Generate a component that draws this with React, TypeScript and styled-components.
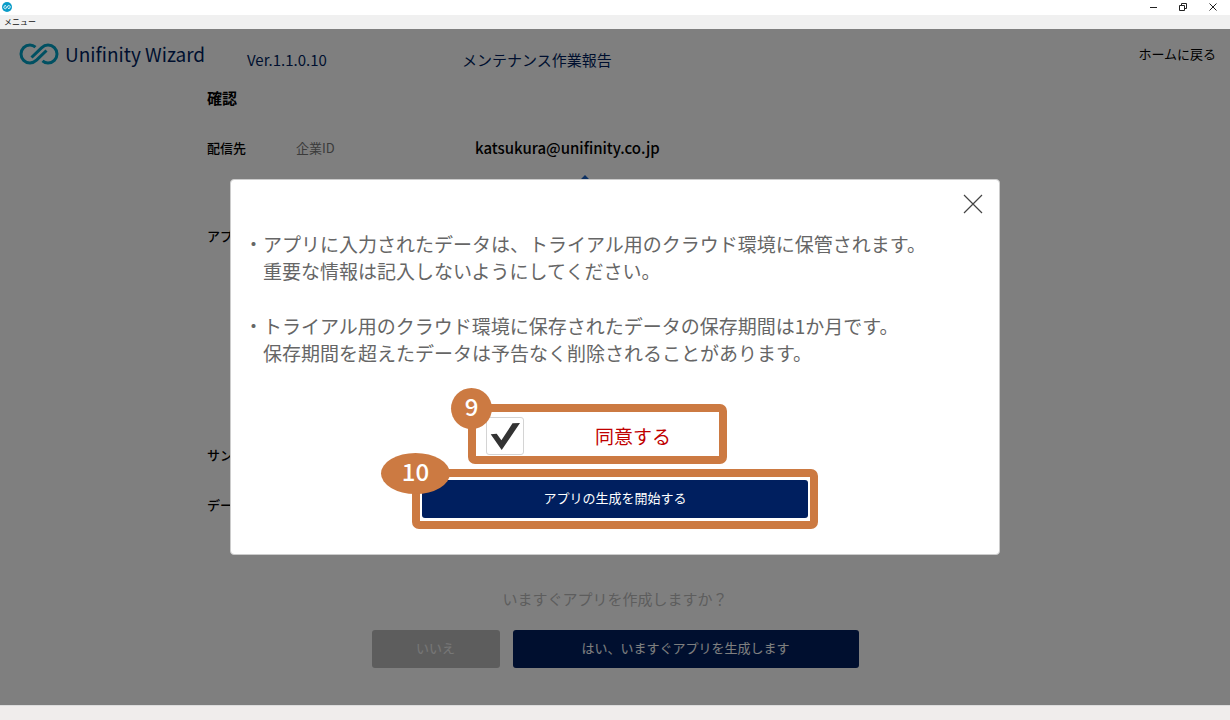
import React, { useState } from "react";
import styled, { createGlobalStyle } from "styled-components";

const Global = createGlobalStyle`
  * { box-sizing: border-box; }
  body { margin: 0; font-family: "Noto Sans CJK JP", "Noto Sans", sans-serif; }
  button { font-family: inherit; cursor: pointer; }
  h1, h2, p, ul { margin: 0; padding: 0; }
`;

const navy = "#001f5f";
const orange = "#cc7a42";

const Window = styled.div`
  min-height: 100vh;
  display: flex;
  flex-direction: column;
  background: #fff;
`;

const TitleBar = styled.div`
  height: 15px;
  display: flex;
  align-items: center;
  justify-content: space-between;
  padding: 0 2px 1px;
`;

const WindowControls = styled.div`
  display: flex;
`;

const WindowButton = styled.button`
  width: 30px;
  height: 14px;
  padding: 0;
  border: 0;
  background: none;
  display: flex;
  align-items: center;
  justify-content: center;
`;

const MenuBar = styled.nav`
  height: 14px;
  display: flex;
  align-items: center;
  background: #f0f0f0;
  padding-left: 4px;
`;

const MenuButton = styled.button`
  border: 0;
  padding: 0;
  background: none;
  font-size: 8px;
  line-height: 14px;
  color: #111;
`;

const Stage = styled.div`
  position: relative;
  flex: 1;
  display: flex;
  flex-direction: column;
`;

const Header = styled.header`
  display: grid;
  grid-template-columns: 228px 215px 1fr auto;
  align-items: center;
  padding: 7px 14px 0 19px;
  color: ${navy};
`;

const Brand = styled.div`
  display: flex;
  align-items: center;
  gap: 6px;
  font-size: 19px;
  line-height: 32px;
`;

const HeaderText = styled.p`
  font-size: 15px;
  line-height: 24px;
  padding-top: 12px;
`;

const HomeLink = styled.a`
  font-size: 13px;
  line-height: 30px;
  color: #000;
  text-decoration: none;
`;

const Content = styled.main`
  width: 816px;
  max-width: 100%;
  margin: 0 auto;
  display: flex;
  flex-direction: column;
`;

const Heading = styled.h1`
  font-size: 15px;
  line-height: 24px;
  font-weight: 700;
  padding: 14px 0 26px;
`;

const Row = styled.div<{ $height: number }>`
  min-height: ${(p) => p.$height}px;
  display: grid;
  grid-template-columns: 89px 179px 1fr;
  align-items: start;
  font-size: 13px;
  line-height: 24px;
`;

const RowLabel = styled.span`
  font-weight: 500;
  color: #000;
`;

const RowKey = styled.span`
  color: #777;
`;

const Account = styled.div`
  font-size: 15px;
  font-weight: 500;
  svg { display: block; margin: 14px 0 0 104px; }
`;

const Question = styled.p`
  text-align: center;
  font-size: 15px;
  line-height: 24px;
  color: #bbb;
`;

const Actions = styled.div`
  display: flex;
  justify-content: center;
  gap: 13px;
  padding: 19px 0 30px;
`;

const Button = styled.button<{ $width: number; $muted?: boolean }>`
  width: ${(p) => p.$width}px;
  height: 38px;
  padding: 0 0 3px;
  border: 0;
  border-radius: 3px;
  background: ${(p) => (p.$muted ? "#bbb" : navy)};
  color: ${(p) => (p.$muted ? "#eee" : "#fff")};
  font-size: 13px;
`;

const Backdrop = styled.div`
  position: absolute;
  inset: 0;
  display: flex;
  align-items: center;
  justify-content: center;
  background: rgba(0, 0, 0, 0.5);
`;

const Dialog = styled.section`
  position: relative;
  width: 770px;
  max-width: 100%;
  border-radius: 4px;
  border: 1px solid #ccc;
  background: #fff;
  padding: 50px 13px 25px;
  display: flex;
  flex-direction: column;
`;

const CloseButton = styled.button`
  position: absolute;
  top: 11px;
  right: 13px;
  width: 26px;
  height: 26px;
  padding: 3px;
  border: 0;
  background: none;
  svg { display: block; }
`;

const Notes = styled.ul`
  list-style: none;
  display: flex;
  flex-direction: column;
  gap: 28px;
  font-size: 19px;
  line-height: 27px;
  color: #666;
  padding-bottom: 38px;
`;

const Note = styled.li`
  padding-left: 19px;
  text-indent: -19px;
`;

const Continued = styled.span`
  display: block;
  text-indent: 0;
`;

const Steps = styled.div`
  display: flex;
  flex-direction: column;
  align-items: center;
  gap: 5px;
`;

const Callout = styled.div<{ $width: number; $pad: string; $shift?: number }>`
  position: relative;
  width: ${(p) => p.$width}px;
  height: 60px;
  margin-right: ${(p) => p.$shift ?? 0}px;
  padding: ${(p) => p.$pad};
  border: 8px solid ${orange};
  border-radius: 7px;
`;

const Badge = styled.span<{ $width: number; $left: number }>`
  position: absolute;
  left: ${(p) => p.$left}px;
  top: -24px;
  width: ${(p) => p.$width}px;
  height: 41px;
  border-radius: 50%;
  background: ${orange};
  color: #fff;
  font-size: 24px;
  font-weight: 500;
  line-height: 36px;
  text-align: center;
`;

const Agree = styled.label`
  display: flex;
  align-items: center;
  gap: 71px;
  font-size: 19px;
  line-height: 38px;
  color: #c00000;
`;

const CheckWrap = styled.span`
  display: grid;
  width: 38px;
  height: 38px;
  > * { grid-area: 1 / 1; }
  svg { pointer-events: none; }
`;

const Checkbox = styled.input`
  appearance: none;
  width: 38px;
  height: 38px;
  margin: 0;
  border: 1px solid #d4d4d4;
  border-radius: 3px;
  background: #fff;
`;

const StatusBar = styled.footer`
  height: 15px;
  background: #f0edec;
  border-top: 1px solid #ddd;
`;

const LoopMark = () => (
  <svg width="40" height="22" viewBox="0 0 40 22" fill="none" stroke="#00a0c4" strokeWidth="3">
    <path d="M12.500 14.500 L22.500 4.800 Q25.500 2 29 2 A9 9 0 0 1 29 20 Q26 20 23.500 17.800" />
    <path d="M27.500 7.500 L17.500 17.200 Q14.500 20 11 20 A9 9 0 0 1 11 2 Q14 2 16.500 4.200" />
  </svg>
);

export default function App() {
  const [agreed, setAgreed] = useState(true);
  return (
    <Window>
      <Global />
      <TitleBar>
        <svg width="10" height="10" viewBox="0 0 10 10">
          <circle cx="5" cy="5" r="5" fill="#0a9cc8" />
          <g fill="none" stroke="#fff" strokeWidth="0.9">
            <path d="M4 5.800 L5.600 4 A1.500 1.500 0 1 1 6 6.300" />
            <path d="M6 4.400 L4.400 6.200 A1.500 1.500 0 1 1 4 3.800" />
          </g>
        </svg>
        <WindowControls>
          <WindowButton aria-label="最小化">
            <svg width="8" height="8" stroke="#222"><path d="M1 4.500H8" /></svg>
          </WindowButton>
          <WindowButton aria-label="元に戻す">
            <svg width="8" height="8" fill="none" stroke="#222"><path d="M.5 2.500H5.500V7.500H.5ZM2.500 2.500V.5H7.500V5.500H5.500" /></svg>
          </WindowButton>
          <WindowButton aria-label="閉じる">
            <svg width="8" height="8" stroke="#222"><path d="M.5 .5L7.500 7.500M7.500 .5L.5 7.500" /></svg>
          </WindowButton>
        </WindowControls>
      </TitleBar>
      <MenuBar><MenuButton>メニュー</MenuButton></MenuBar>
      <Stage>
        <Header>
          <Brand>
            <LoopMark />
            Unifinity Wizard
          </Brand>
          <HeaderText>Ver.1.1.0.10</HeaderText>
          <HeaderText>メンテナンス作業報告</HeaderText>
          <HomeLink href="#home">ホームに戻る</HomeLink>
        </Header>
        <Content>
          <Heading>確認</Heading>
          <Row $height={88}>
            <RowLabel>配信先</RowLabel>
            <RowKey>企業ID</RowKey>
            <Account>
              katsukura@unifinity.co.jp
              <svg width="12" height="12" viewBox="0 0 12 12" fill="#1c63c4"><path d="M6 1 L11 6 H8 V12 H4 V6 H1 Z" /></svg>
            </Account>
          </Row>
          <Row $height={219}><RowLabel>アプ</RowLabel></Row>
          <Row $height={50}><RowLabel>サン</RowLabel></Row>
          <Row $height={94}><RowLabel>デー</RowLabel></Row>
          <Question>いますぐアプリを作成しますか？</Question>
          <Actions>
            <Button $width={128} $muted>いいえ</Button>
            <Button $width={346}>はい、いますぐアプリを生成します</Button>
          </Actions>
        </Content>
        <Backdrop>
          <Dialog role="dialog" aria-modal="true">
            <CloseButton aria-label="閉じる">
              <svg width="20" height="20" stroke="#444" strokeWidth="1.200"><path d="M1 1L19 19M19 1L1 19" /></svg>
            </CloseButton>
            <Notes>
              <Note>・アプリに入力されたデータは、トライアル用のクラウド環境に保管されます。<Continued>重要な情報は記入しないようにしてください。</Continued></Note>
              <Note>・トライアル用のクラウド環境に保存されたデータの保存期間は1か月です。<Continued>保存期間を超えたデータは予告なく削除されることがあります。</Continued></Note>
            </Notes>
            <Steps>
              <Callout $width={259} $pad="5px 10px" $shift={35}>
                <Agree>
                  <CheckWrap>
                    <Checkbox type="checkbox" checked={agreed} onChange={(e) => setAgreed(e.target.checked)} />
                    {agreed && (
                      <svg width="38" height="38" fill="#333"><path d="M4.700 17.300L10.700 16.700L15.400 23.300L26.500 6.300L34 6L15.700 33Z" /></svg>
                    )}
                  </CheckWrap>
                  同意する
                </Agree>
                <Badge $width={41} $left={-25}>9</Badge>
              </Callout>
              <Callout $width={406} $pad="3px 2px">
                <Button $width={386}>アプリの生成を開始する</Button>
                <Badge $width={69} $left={-39}>10</Badge>
              </Callout>
            </Steps>
          </Dialog>
        </Backdrop>
      </Stage>
      <StatusBar />
    </Window>
  );
}
